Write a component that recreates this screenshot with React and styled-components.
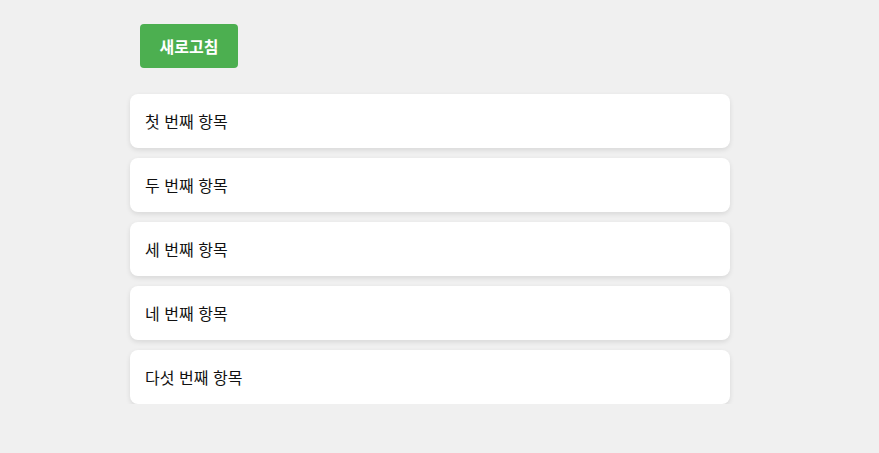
import React from "react";
import styled, { createGlobalStyle } from "styled-components";

const GlobalStyle = createGlobalStyle`
  html, body {
    margin: 0;
    padding: 0;
    background: #f0f0f0;
  }
  body {
    font-family: "Noto Sans CJK KR", "Noto Sans", sans-serif;
    color: #111;
  }
`;

const items = ["첫 번째 항목", "두 번째 항목", "세 번째 항목", "네 번째 항목", "다섯 번째 항목"];

function App() {
  return (
    <>
      <GlobalStyle />
      <Page>
        <Toolbar>
          <RefreshButton>새로고침</RefreshButton>
        </Toolbar>
        <List>
          {items.map((item) => (
            <Card key={item}>{item}</Card>
          ))}
        </List>
      </Page>
    </>
  );
}

export default App;

const Page = styled.div`
  width: 600px;
  padding: 24px 0 0 130px;
`;

const Toolbar = styled.div`
  display: flex;
  padding: 0 10px;
  margin-bottom: 26px;
`;

const RefreshButton = styled.button`
  background-color: #4caf50;
  color: #ffffff;
  border: none;
  border-radius: 4px;
  height: 44px;
  width: 98px;
  padding: 0;
  font-family: inherit;
  font-size: 16px;
  font-weight: 700;
  cursor: pointer;
`;

const List = styled.div`
  display: flex;
  flex-direction: column;
  gap: 10px;
`;

const Card = styled.div`
  background: #ffffff;
  border-radius: 8px;
  height: 54px;
  box-sizing: border-box;
  padding: 0 15px;
  display: flex;
  align-items: center;
  font-size: 16px;
  word-spacing: 1px;
  box-shadow: 0 2px 5px rgba(0, 0, 0, 0.1);
`;
